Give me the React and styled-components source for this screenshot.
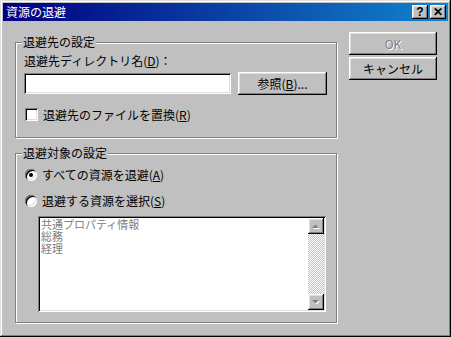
import React from "react"
import styled, { createGlobalStyle } from "styled-components"

const GlobalStyle = createGlobalStyle`
    html, body {
        margin: 0;
        padding: 0;
        background: #c0c0c0;
    }
    * {
        box-sizing: border-box;
    }
`

const font = `"Noto Sans CJK JP", "Liberation Sans", sans-serif`

const raised = `
    inset -1px -1px #000,
    inset 1px 1px #fff,
    inset -2px -2px #808080,
    inset 2px 2px #dfdfdf
`

const sunken = `
    inset 1px 1px #808080,
    inset -1px -1px #fff,
    inset 2px 2px #000,
    inset -2px -2px #dfdfdf
`

const Window = styled.div`
    width: 451px;
    height: 337px;
    padding: 3px;
    background: #c0c0c0;
    box-shadow:
        inset -1px -1px #000,
        inset 1px 1px #dfdfdf,
        inset -2px -2px #808080,
        inset 2px 2px #fff;
    font-family: ${font};
    font-size: 12px;
    line-height: 12px;
    color: #000;
`

const TitleBar = styled.div`
    display: flex;
    align-items: center;
    justify-content: space-between;
    height: 18px;
    padding: 0 2px 0 2px;
    background: linear-gradient(90deg, #000080 0%, #0a3aa0 45%, #1084d0 100%);
`

const Title = styled.span`
    color: #fff;
    font-size: 12px;
    line-height: 12px;
    padding-left: 1px;
`

const TitleButtons = styled.div`
    display: flex;
    gap: 2px;
`

const TitleButton = styled.span`
    display: flex;
    align-items: center;
    justify-content: center;
    width: 16px;
    height: 14px;
    background: #c0c0c0;
    box-shadow: ${raised};
    font-family: "Liberation Sans", sans-serif;
    font-weight: bold;
    font-size: 12px;
    line-height: 12px;
`

const Body = styled.div`
    display: flex;
    padding: 11px 0 0 12px;
`

const MainColumn = styled.div`
    display: flex;
    flex-direction: column;
    width: 322px;
`

const SideColumn = styled.div`
    display: flex;
    flex-direction: column;
    gap: 2px;
    margin-left: 12px;
`

const Group = styled.div`
    position: relative;
    height: ${p => p.$height}px;
    margin-top: ${p => p.$top}px;
    padding: ${p => p.$pad}px 8px 0 8px;
    border: 1px solid #808080;
    box-shadow: inset 1px 1px #fff, 1px 1px #fff;
`

const Legend = styled.span`
    position: absolute;
    top: -7px;
    left: 6px;
    padding: 0 1px;
    background: #c0c0c0;
    line-height: 12px;
`

const FieldLabel = styled.div`
    line-height: 12px;
`

const InputRow = styled.div`
    display: flex;
    align-items: center;
    margin-top: 5px;
`

const TextInput = styled.div`
    width: 207px;
    height: 21px;
    background: #fff;
    box-shadow: ${sunken};
`

const Button = styled.div`
    display: flex;
    align-items: center;
    justify-content: center;
    width: ${p => p.$width || 88}px;
    height: 23px;
    margin-left: ${p => p.$gap || 0}px;
    background: #c0c0c0;
    box-shadow: ${raised};
    color: ${p => (p.$disabled ? "#808080" : "#000")};
    text-shadow: ${p => (p.$disabled ? "1px 1px #fff" : "none")};
    line-height: 12px;
`

const CheckRow = styled.div`
    display: flex;
    align-items: center;
    gap: 5px;
    margin-top: ${p => p.$top}px;
    padding-left: 1px;
`

const Checkbox = styled.span`
    width: 13px;
    height: 13px;
    background: #fff;
    box-shadow: ${sunken};
`

const Radio = styled.span`
    position: relative;
    width: 12px;
    height: 12px;
    border-radius: 50%;
    background: #fff;
    box-shadow:
        inset 1px 1px #808080,
        inset -1px -1px #fff,
        inset 2px 2px #000,
        inset -2px -2px #dfdfdf;

    &::after {
        content: "";
        display: ${p => (p.$checked ? "block" : "none")};
        position: absolute;
        left: 4px;
        top: 4px;
        width: 4px;
        height: 4px;
        border-radius: 50%;
        background: #000;
    }
`

const ListBox = styled.div`
    display: flex;
    width: 288px;
    height: 96px;
    margin: 9px 0 0 14px;
    padding: 2px;
    background: #fff;
    box-shadow: ${sunken};
`

const Items = styled.div`
    flex: 1;
    padding: 0 1px;
`

const Item = styled.div`
    height: 12px;
    color: #808080;
    font-size: 11px;
    line-height: 12px;
`

const ScrollBar = styled.div`
    display: flex;
    flex-direction: column;
    justify-content: space-between;
    width: 16px;
    background: repeating-conic-gradient(#c0c0c0 0 25%, #fff 0 50%) 0 0 / 2px 2px;
`

const ScrollButton = styled.span`
    display: flex;
    align-items: center;
    justify-content: center;
    width: 16px;
    height: 16px;
    background: #c0c0c0;
    box-shadow: ${raised};
`

const Arrow = ({ down }) => (
    <svg width="8" height="5" viewBox="0 0 8 5">
        <polygon
            points={down ? "0,0 7,0 3.5,3.5" : "0,4 7,4 3.5,0.5"}
            fill="#fff"
            transform="translate(1,1)"
        />
        <polygon
            points={down ? "0,0 7,0 3.5,3.5" : "0,4 7,4 3.5,0.5"}
            fill="#808080"
        />
    </svg>
)

const Key = ({ children }) => <u>{children}</u>

const App = () => (
    <>
        <GlobalStyle />
        <Window>
            <TitleBar>
                <Title>資源の退避</Title>
                <TitleButtons>
                    <TitleButton>?</TitleButton>
                    <TitleButton>✕</TitleButton>
                </TitleButtons>
            </TitleBar>
            <Body>
                <MainColumn>
                    <Group $top={10} $height={96} $pad={12}>
                        <Legend>退避先の設定</Legend>
                        <FieldLabel>
                            退避先ディレクトリ名(<Key>D</Key>)：
                        </FieldLabel>
                        <InputRow>
                            <TextInput />
                            <Button $width={89} $gap={7}>
                                参照(<Key>B</Key>)...
                            </Button>
                        </InputRow>
                        <CheckRow $top={13}>
                            <Checkbox />
                            <span>退避先のファイルを置換(<Key>R</Key>)</span>
                        </CheckRow>
                    </Group>
                    <Group $top={15} $height={170} $pad={15}>
                        <Legend>退避対象の設定</Legend>
                        <CheckRow $top={0}>
                            <Radio $checked />
                            <span>すべての資源を退避(<Key>A</Key>)</span>
                        </CheckRow>
                        <CheckRow $top={14}>
                            <Radio />
                            <span>退避する資源を選択(<Key>S</Key>)</span>
                        </CheckRow>
                        <ListBox>
                            <Items>
                                <Item>共通プロパティ情報</Item>
                                <Item>総務</Item>
                                <Item>経理</Item>
                            </Items>
                            <ScrollBar>
                                <ScrollButton>
                                    <Arrow />
                                </ScrollButton>
                                <ScrollButton>
                                    <Arrow down />
                                </ScrollButton>
                            </ScrollBar>
                        </ListBox>
                    </Group>
                </MainColumn>
                <SideColumn>
                    <Button $disabled>OK</Button>
                    <Button>キャンセル</Button>
                </SideColumn>
            </Body>
        </Window>
    </>
)

export default App
